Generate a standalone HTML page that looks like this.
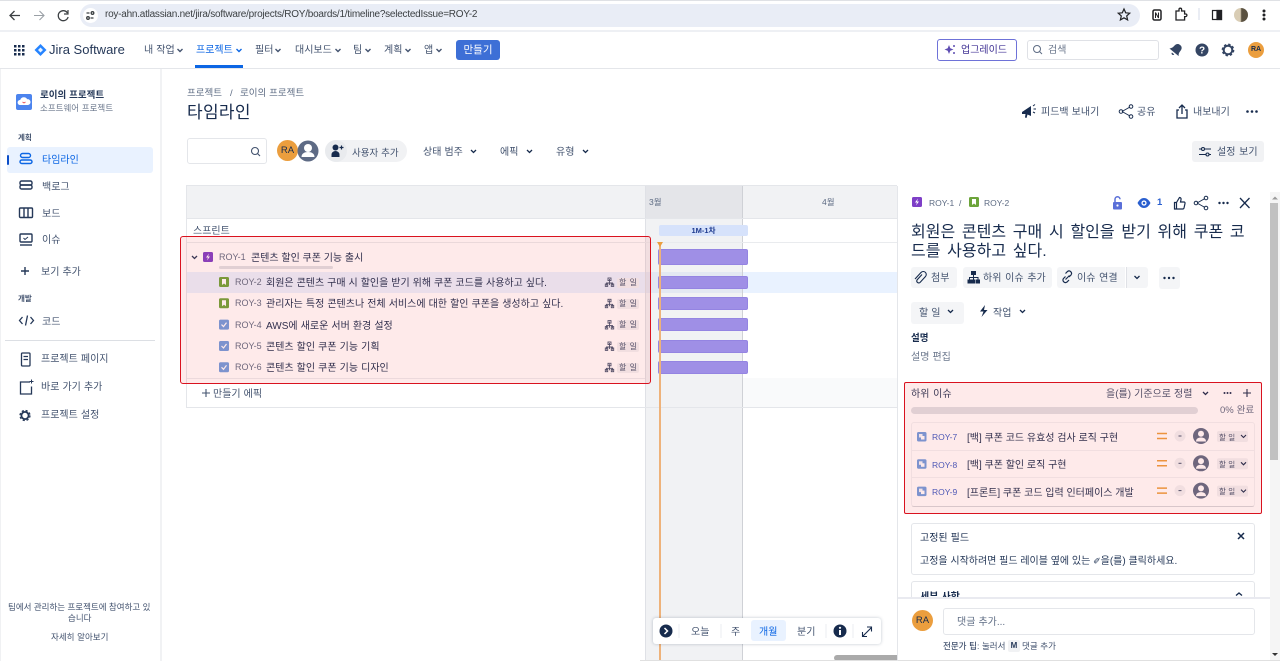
<!DOCTYPE html>
<html lang="ko"><head><meta charset="utf-8"><title>타임라인</title>
<style>
html,body{margin:0;padding:0;width:1280px;height:661px;overflow:hidden;background:#fff}
body{position:relative;font-family:"Liberation Sans","Noto Sans CJK KR",sans-serif;color:#42526e;font-size:10px}
.b{position:absolute}
.t{position:absolute;white-space:nowrap;line-height:14px;font-size:10px;word-spacing:.3px;color:#42526e;margin-top:4px}
.n{margin-top:0}
.id{font-size:9px;color:#5e6c84;margin-top:2px}
svg{position:absolute;overflow:visible}
.tag{position:absolute;background:#f1f2f4;border-radius:2px;width:22px;height:10px;text-align:center;font-size:8px;line-height:10px;color:#42526e;word-spacing:1px}
.bar{position:absolute;left:658px;width:90px;height:13px;background:#9f8fe6;border:1px solid #9484e2;box-sizing:border-box;border-radius:2px}
</style></head><body>
<!-- Browser chrome -->
<div class="b" style="left:0;top:0;width:1280px;height:1px;background:#dfe1e5"></div>
<div class="b" style="left:0;top:30px;width:1280px;height:2px;background:#eef0f4"></div>
<div class="b" style="left:80px;top:4px;width:1060px;height:23px;background:#e9edf6;border-radius:12px"></div>
<div class="b" style="left:83px;top:8px;width:15px;height:15px;background:#fff;border-radius:50%"></div>
<svg style="left:0;top:0" width="110" height="30" fill="none" stroke="#3c4043" stroke-width="1.300">
<path d="M20 15.500H10M14.500 11l-4.500 4.500 4.500 4.500"/>
<path d="M44 15.500H34M39.500 11l4.500 4.500-4.500 4.500" stroke="#9aa0a6" stroke-width="1.100"/>
<path d="M67.500 13a5 5 0 1 0 .6 4"/><path d="M68 10v4h-4" stroke-width="1.200"/>
<path d="M86.500 13h3M90.500 18h3" stroke-width="1.200"/><circle cx="92.500" cy="13" r="1.300"/><circle cx="88" cy="18" r="1.300"/>
</svg>
<div class="t n" style="left:105px;top:8px;font-size:10px;letter-spacing:-.24px;word-spacing:0;color:#3c4043">roy-ahn.atlassian.net/jira/software/projects/ROY/boards/1/timeline?selectedIssue=ROY-2</div>
<svg style="left:1115px;top:5px" width="160" height="20" fill="none" stroke="#202124" stroke-width="1.200">
<path d="M9 4l1.700 3.800 4 .4-3 2.700.9 4L9 12.800 5.400 14.900l.9-4-3-2.700 4-.4z"/>
<rect x="38" y="5" width="8" height="10" rx="1.500" stroke-width="1.500"/><path d="M40.500 13V7.500l3 5.500V7.500" stroke-width="1"/>
<path d="M61 6h3V4.500a1.300 1.300 0 0 1 2.600 0V6h3v3h1a1.300 1.300 0 0 1 0 2.600h-1V15H61z" stroke-width="1.300"/>
<path d="M84 3v12" stroke="#d5dbe8" stroke-width="1"/>
<rect x="97.500" y="5.500" width="9" height="9" stroke-width="1.200"/><rect x="102" y="5.500" width="4.500" height="9" fill="#202124"/>
<circle cx="149" cy="6" r=".9" fill="#202124"/><circle cx="149" cy="10" r=".9" fill="#202124"/><circle cx="149" cy="14" r=".9" fill="#202124"/>
</svg>
<div class="b" style="left:1234px;top:8px;width:14px;height:14px;border-radius:50%;background:linear-gradient(90deg,#d9cdb5 0 45%,#5a5140 55% 100%)"></div>

<!-- Top nav -->
<div class="b" style="left:0;top:68px;width:1280px;height:1px;background:#e4e6ea"></div>
<svg style="left:14px;top:45px" width="12" height="12" fill="#172b4d"><rect x="0" y="0" width="2.500" height="2.500"/><rect x="4" y="0" width="2.500" height="2.500"/><rect x="8" y="0" width="2.500" height="2.500"/><rect x="0" y="4" width="2.500" height="2.500"/><rect x="4" y="4" width="2.500" height="2.500"/><rect x="8" y="4" width="2.500" height="2.500"/><rect x="0" y="8" width="2.500" height="2.500"/><rect x="4" y="8" width="2.500" height="2.500"/><rect x="8" y="8" width="2.500" height="2.500"/></svg>
<svg style="left:34px;top:44px" width="13" height="13"><path d="M6.500 0L12.500 6 6.500 12 .5 6z" fill="#2684ff"/><path d="M6.500 3.500L9 6 6.500 8.500 4 6z" fill="#fff" opacity=".9"/></svg>
<div class="t n" style="left:49px;top:43px;font-size:13px;word-spacing:0;color:#253858">Jira Software</div>
<div class="t" style="left:144px;top:40px">내 작업</div>
<div class="t" style="left:196px;top:40px;color:#0c66e4">프로젝트</div>
<div class="t" style="left:255px;top:40px">필터</div>
<div class="t" style="left:295px;top:40px">대시보드</div>
<div class="t" style="left:353px;top:40px">팀</div>
<div class="t" style="left:384px;top:40px">계획</div>
<div class="t" style="left:424px;top:40px">앱</div>
<svg style="left:0;top:46px" width="500" height="10" fill="none" stroke="#42526e" stroke-width="1.400">
<path d="M177.500 3l2.500 2.500L182.500 3M275.500 3l2.500 2.500L280.500 3M335.500 3l2.500 2.500L340.500 3M365.500 3l2.500 2.500L370.500 3M405.500 3l2.500 2.500L410.500 3M436.500 3l2.500 2.500L441.500 3"/>
<path d="M236.500 3l2.500 2.500L241.500 3" stroke="#0c66e4"/>
</svg>
<div class="b" style="left:195px;top:65px;width:48px;height:3px;background:#0c66e4"></div>
<div class="b" style="left:456px;top:40px;width:44px;height:20px;background:#3d6fd6;border-radius:3px;color:#fff;text-align:center;line-height:20px;font-size:10.500px">만들기</div>
<div class="b" style="left:937px;top:39px;width:78px;height:20px;border:1px solid #6e72d8;border-radius:3px"></div>
<svg style="left:944px;top:43px" width="14" height="14" fill="#5e4db2"><path d="M5 2l1.300 3.200L9.500 6.500 6.300 7.800 5 11 3.700 7.800.5 6.500l3.200-1.300z"/><circle cx="10" cy="3" r="1"/><circle cx="10" cy="10" r="1"/></svg>
<div class="t" style="left:961px;top:40px;color:#403294">업그레이드</div>
<div class="b" style="left:1027px;top:40px;width:130px;height:18px;border:1.500px solid #dfe1e6;border-radius:3px"></div>
<svg style="left:1032px;top:44px" width="12" height="12" fill="none" stroke="#5e6c84" stroke-width="1"><circle cx="5" cy="5" r="3.500"/><path d="M7.500 7.500L10 10"/></svg>
<div class="t" style="left:1048px;top:40px;color:#6b778c">검색</div>
<svg style="left:1169px;top:42px" width="70" height="16">
<g transform="rotate(40 7 8)" fill="#344563"><path d="M7 1.500c-2.800 0-4 2-4 4.500 0 2.500-.8 3.800-2 5h12c-1.200-1.200-2-2.500-2-5 0-2.500-1.200-4.500-4-4.500z"/><path d="M5.500 12.500h3a1.500 1.500 0 0 1-3 0z"/></g>
<circle cx="33" cy="8" r="6.500" fill="#344563"/><text x="33" y="11.500" text-anchor="middle" font-size="10" font-weight="700" fill="#fff" font-family="Liberation Sans">?</text>
<circle cx="59" cy="8" r="4.300" fill="none" stroke="#344563" stroke-width="2"/>
<circle cx="59" cy="8" r="5.600" fill="none" stroke="#344563" stroke-width="1.500" stroke-dasharray="2.400 2"/>
</svg>
<div class="b" style="left:1248px;top:42px;width:16px;height:16px;border-radius:50%;background:#eb9e3e;color:#172b4d;font-size:7px;font-weight:700;text-align:center;line-height:16px">RA</div>

<!-- Sidebar -->
<div class="b" style="left:0;top:69px;width:1px;height:592px;background:#f0f1f3"></div>
<div class="b" style="left:160px;top:69px;width:2px;height:592px;background:#f1f2f4"></div>
<div class="b" style="left:16px;top:94px;width:16px;height:16px;background:#4c84ee;border-radius:2px"></div>
<svg style="left:16px;top:94px" width="16" height="16"><path d="M4 11a2.500 2.500 0 0 1 .2-5 3.800 3.800 0 0 1 7-.8A2.900 2.900 0 0 1 12 11z" fill="#fff"/><path d="M6.500 8l1.500 1 1.500-1" stroke="#e5484d" fill="none" stroke-width=".8"/></svg>
<div class="t" style="left:40px;top:85px;font-weight:700;color:#253858;font-size:9.500px">로이의 프로젝트</div>
<div class="t n" style="left:40px;top:101px;font-size:8.500px;color:#6b778c">소프트웨어 프로젝트</div>
<div class="t n" style="left:18px;top:131px;font-size:7.500px;font-weight:700;color:#42526e">계획</div>
<div class="b" style="left:7px;top:147px;width:146px;height:26px;background:#e9f2ff;border-radius:3px"></div>
<div class="b" style="left:7px;top:155px;width:2px;height:10px;background:#0c4ec8;border-radius:1px"></div>
<svg style="left:18px;top:150px" width="18" height="130" fill="none" stroke="#253858" stroke-width="1.400">
<rect x="2.500" y="3.500" width="10" height="4" rx="2" stroke="#0c66e4"/><rect x="2" y="10" width="12" height="3.500" rx="1.750" stroke="#0c66e4"/>
<rect x="2" y="31" width="12" height="4" rx="1.500"/><rect x="2" y="35" width="12" height="4" rx="1.500"/>
<rect x="1.500" y="58" width="13" height="9.500" rx="1"/><path d="M6 58v9.500M10 58v9.500"/>
<rect x="2" y="84" width="12" height="8" rx="1"/><path d="M2 95h12"/><path d="M5.500 88l1.500 1.500 3-2.500" stroke-width="1"/>
<path d="M7 117v8M3 121h8"/>
</svg>
<div class="t" style="left:42px;top:150px;color:#0c66e4">타임라인</div>
<div class="t" style="left:42px;top:177px">백로그</div>
<div class="t" style="left:42px;top:204px">보드</div>
<div class="t" style="left:42px;top:230px">이슈</div>
<div class="t" style="left:41px;top:262px">보기 추가</div>
<div class="t n" style="left:18px;top:292px;font-size:7.500px;font-weight:700;color:#42526e">개발</div>
<svg style="left:18px;top:312px" width="18" height="18" fill="none" stroke="#253858" stroke-width="1.300"><path d="M5 5L2 8.500 5 12M13 5l3 3.500L13 12M10 3.500L8 13.500" transform="translate(-.5,0)"/></svg>
<div class="t" style="left:42px;top:312px">코드</div>
<div class="b" style="left:5px;top:340px;width:150px;height:1px;background:#dcdfe4"></div>
<svg style="left:18px;top:350px" width="18" height="75" fill="none" stroke="#253858" stroke-width="1.300">
<rect x="3.500" y="3" width="8.500" height="13" rx="1"/><path d="M5.500 6.500h4.500M5.500 9.500h4.500"/>
<path d="M12 32H2.500v12h11V36.500"/><path d="M13.500 29.500v4M11.500 31.500h4" stroke-width="1"/>
<circle cx="7" cy="65.500" r="3.600" stroke-width="1.800"/><circle cx="7" cy="65.500" r="5" stroke-width="1.300" stroke-dasharray="2.200 1.800"/>
</svg>
<div class="t" style="left:41px;top:349px">프로젝트 페이지</div>
<div class="t" style="left:41px;top:377px">바로 가기 추가</div>
<div class="t" style="left:41px;top:405px">프로젝트 설정</div>
<div class="t n" style="left:8px;top:600px;font-size:8.500px;word-spacing:0;color:#42526e">팀에서 관리하는 프로젝트에 참여하고 있</div>
<div class="t n" style="left:68px;top:611px;font-size:8.500px;color:#42526e">습니다</div>
<div class="t n" style="left:51px;top:630px;font-size:8.500px;color:#42526e">자세히 알아보기</div>

<!-- Header -->
<div class="t" style="left:187px;top:83px;font-size:9.500px;color:#5e6c84">프로젝트</div>
<div class="t" style="left:230px;top:83px;font-size:9.500px;color:#5e6c84">/</div>
<div class="t" style="left:240px;top:83px;font-size:9.500px;color:#5e6c84">로이의 프로젝트</div>
<div class="t" style="left:187px;top:98px;font-size:17px;line-height:22px;color:#172b4d;letter-spacing:.3px">타임라인</div>
<svg style="left:1020px;top:102px" width="250" height="20" fill="#172b4d">
<path d="M2 10L11 4v10L7.500 12.500 6.500 16 5 15.500 5.500 12 2 12z"/><path d="M13 5l2-1.500M13.500 8h2.500M13 11l2 1" stroke="#172b4d" fill="none" transform="translate(0,-1)"/>
<g fill="none" stroke="#172b4d" stroke-width="1"><path d="M102 9.500l8-4.500M102 9.500l8 4.500"/><circle cx="101" cy="9.500" r="1.800"/><circle cx="111" cy="4.500" r="1.800"/><circle cx="111" cy="14.500" r="1.800"/>
<path d="M159 8h-2v8h10V8h-2M162 12V3.500M159 6l3-3 3 3" stroke-width="1.300"/></g>
<circle cx="227.500" cy="9.500" r="1.300"/><circle cx="232" cy="9.500" r="1.300"/><circle cx="236.500" cy="9.500" r="1.300"/>
</svg>
<div class="t" style="left:1041px;top:102px">피드백 보내기</div>
<div class="t" style="left:1137px;top:102px">공유</div>
<div class="t" style="left:1193px;top:102px">내보내기</div>
<!-- Toolbar -->
<div class="b" style="left:187px;top:138px;width:80px;height:26px;border:1.500px solid #e4e6ea;border-radius:3px;box-sizing:border-box"></div>
<svg style="left:250px;top:146px" width="12" height="12" fill="none" stroke="#42526e" stroke-width="1.100"><circle cx="5" cy="5" r="3.500"/><path d="M7.500 7.500L10 10"/></svg>
<div class="b" style="left:277px;top:140px;width:21px;height:21px;border-radius:50%;background:#eb9e3e;color:#172b4d;font-size:9.500px;text-align:center;line-height:21px">RA</div>
<svg style="left:297px;top:140px" width="22" height="22"><circle cx="11" cy="11" r="10.500" fill="#5e6b85"/><circle cx="11" cy="8" r="4" fill="#fff"/><path d="M4.500 17c0-3.500 3-5 6.500-5s6.500 1.500 6.500 5z" fill="#fff"/></svg>
<div class="b" style="left:325px;top:140px;width:82px;height:22px;background:#f1f2f4;border-radius:11px"></div>
<div class="b" style="left:325px;top:140px;width:22px;height:22px;background:#e9ebee;border-radius:11px"></div>
<svg style="left:329px;top:143px" width="16" height="16" fill="#172b4d"><circle cx="6.500" cy="4.500" r="3"/><path d="M2.500 14v-2.500c0-2 2-3.500 4-3.500s4 1.500 4 3.500V14z"/><path d="M10.500 4.500h4M12.500 2.500v4" stroke="#172b4d" stroke-width="1.200"/></svg>
<div class="t" style="left:352px;top:143px;font-size:9.500px">사용자 추가</div>
<div class="t" style="left:423px;top:142px">상태 범주</div>
<div class="t" style="left:500px;top:142px">에픽</div>
<div class="t" style="left:556px;top:142px">유형</div>
<svg style="left:0;top:148px" width="600" height="8" fill="none" stroke="#172b4d" stroke-width="1.300"><path d="M471 2l2.500 2.500L476 2M527 2l2.500 2.500L532 2M583 2l2.500 2.500L588 2"/></svg>
<div class="b" style="left:1192px;top:141px;width:72px;height:21px;background:#f1f2f4;border-radius:3px"></div>
<svg style="left:1198px;top:145px" width="14" height="13" fill="none" stroke="#172b4d" stroke-width="1.100"><path d="M1 4h12M1 9.500h12"/><circle cx="5" cy="4" r="1.500" fill="#f1f2f4"/><circle cx="9.500" cy="9.500" r="1.500" fill="#f1f2f4"/></svg>
<div class="t" style="left:1217px;top:142px;word-spacing:1px">설정 보기</div>

<!-- Timeline table -->
<div class="b" style="left:186px;top:185px;width:711px;height:1px;background:#e4e6ea"></div>
<div class="b" style="left:186px;top:186px;width:1px;height:222px;background:#e4e6ea"></div>
<div class="b" style="left:187px;top:186px;width:458px;height:32px;background:#f1f2f4"></div>
<div class="b" style="left:645px;top:186px;width:1px;height:475px;background:#dfe1e6"></div>
<div class="b" style="left:646px;top:186px;width:96px;height:32px;background:#e4e5e9"></div>
<div class="b" style="left:743px;top:186px;width:154px;height:32px;background:#f1f2f4"></div>
<div class="b" style="left:646px;top:218px;width:96px;height:443px;background:#f1f2f4"></div>
<div class="b" style="left:742px;top:186px;width:1px;height:475px;background:#cfd1d6"></div>
<div class="b" style="left:187px;top:218px;width:710px;height:1px;background:#e4e6ea"></div>
<div class="b" style="left:187px;top:242px;width:710px;height:1px;background:#e9ebee"></div>
<div class="b" style="left:187px;top:272px;width:458px;height:21px;background:#e9f2ff"></div>
<div class="b" style="left:646px;top:272px;width:96px;height:21px;background:#e3e8f2"></div>
<div class="b" style="left:743px;top:272px;width:154px;height:21px;background:#e9f2ff"></div>
<div class="b" style="left:743px;top:378px;width:154px;height:30px;background:#f9fafb"></div>
<div class="b" style="left:187px;top:378px;width:458px;height:1px;background:#ebecf0"></div>
<div class="b" style="left:187px;top:407px;width:710px;height:1px;background:#e4e6ea"></div>
<div class="t n" style="left:649px;top:195px;font-size:8.500px;color:#5e6c84">3월</div>
<div class="t n" style="left:822px;top:195px;font-size:8.500px;color:#5e6c84">4월</div>
<div class="t" style="left:193px;top:221px;color:#42526e">스프린트</div>
<div class="b" style="left:659px;top:225px;width:89px;height:11px;background:#d6e2fb;border-radius:2px;text-align:center;font-size:7.500px;line-height:11px;font-weight:700;color:#1d3a8f">1M-1차</div>
<div class="bar" style="top:249px;height:16px"></div>
<div class="bar" style="top:276px"></div><div class="bar" style="top:297px"></div><div class="bar" style="top:318px"></div><div class="bar" style="top:340px"></div><div class="bar" style="top:361px"></div>
<div class="b" style="left:659px;top:243px;width:2px;height:418px;background:#eeb27a"></div>
<svg style="left:657px;top:242px" width="6" height="5"><path d="M0 0h6L3 5z" fill="#eb9e3e"/></svg>

<!-- Rows -->
<svg style="left:190px;top:254px" width="10" height="8" fill="none" stroke="#253858" stroke-width="1.300"><path d="M2 2l2.500 2.500L7 2"/></svg>
<svg style="left:203px;top:252px" width="10" height="10"><rect width="10" height="10" rx="1.500" fill="#7e3fc7"/><path d="M6 1.500L3 5.500h2L4 8.500l3-4H5z" fill="#fff"/></svg>
<div class="t id" style="left:219px;top:248px">ROY-1</div>
<div class="t" style="left:251px;top:248px;color:#172b4d;word-spacing:0">콘텐츠 할인 쿠폰 기능 출시</div>
<div class="b" style="left:219px;top:266px;width:114px;height:3px;background:#dfe1e6;border-radius:2px"></div>
<svg style="left:219px;top:277px" width="10" height="96">
<rect width="10" height="10" rx="1.500" fill="#6ca43a"/><path d="M3 2h4v6L5 6.500 3 8z" fill="#fff"/>
<rect y="21.300" width="10" height="10" rx="1.500" fill="#6ca43a"/><path d="M3 23.300h4v6l-2-1.500-2 1.500z" fill="#fff"/>
<rect y="42.600" width="10" height="10" rx="1.500" fill="#6f9ee0"/><path d="M2.500 47.600l2 2 3-4" stroke="#fff" fill="none" stroke-width="1.200"/>
<rect y="64" width="10" height="10" rx="1.500" fill="#6f9ee0"/><path d="M2.500 69l2 2 3-4" stroke="#fff" fill="none" stroke-width="1.200"/>
<rect y="85.300" width="10" height="10" rx="1.500" fill="#6f9ee0"/><path d="M2.500 90.300l2 2 3-4" stroke="#fff" fill="none" stroke-width="1.200"/>
</svg>
<div class="t id" style="left:235px;top:273px">ROY-2</div><div class="t" style="left:266px;top:273px;color:#172b4d;word-spacing:.2px">회원은 콘텐츠 구매 시 할인을 받기 위해 쿠폰 코드를 사용하고 싶다.</div>
<div class="t id" style="left:235px;top:294px">ROY-3</div><div class="t" style="left:266px;top:294px;color:#172b4d;word-spacing:.3px">관리자는 특정 콘텐츠나 전체 서비스에 대한 할인 쿠폰을 생성하고 싶다.</div>
<div class="t id" style="left:235px;top:316px">ROY-4</div><div class="t" style="left:266px;top:316px;color:#172b4d">AWS에 새로운 서버 환경 설정</div>
<div class="t id" style="left:235px;top:337px">ROY-5</div><div class="t" style="left:266px;top:337px;color:#172b4d">콘텐츠 할인 쿠폰 기능 기획</div>
<div class="t id" style="left:235px;top:358px">ROY-6</div><div class="t" style="left:266px;top:358px;color:#172b4d">콘텐츠 할인 쿠폰 기능 디자인</div>
<svg style="left:605px;top:278px" width="9" height="94" fill="none" stroke="#42526e" stroke-width=".9">
<g id="h"><path d="M4.500 1v6M1.500 7.500V5h6v2.500"/><rect x="3" y="0" width="3" height="2.500"/><rect x=".3" y="6" width="2.400" height="2.400"/><rect x="6.300" y="6" width="2.400" height="2.400"/></g>
<use href="#h" y="21.300"/><use href="#h" y="42.600"/><use href="#h" y="64"/><use href="#h" y="85.300"/>
</svg>
<div class="tag" style="left:617px;top:278px">할 일</div><div class="tag" style="left:617px;top:299px">할 일</div><div class="tag" style="left:617px;top:320px">할 일</div><div class="tag" style="left:617px;top:342px">할 일</div><div class="tag" style="left:617px;top:363px">할 일</div>
<svg style="left:201px;top:388px" width="10" height="10" stroke="#42526e" stroke-width="1.100"><path d="M5 1v8M1 5h8"/></svg>
<div class="t" style="left:213px;top:384px">만들기 에픽</div>
<!-- Red highlight left -->
<div class="b" style="left:180px;top:236px;width:471px;height:148px;box-sizing:border-box;border:1.500px solid #d9121f;border-radius:3px;background:rgba(250,60,60,.11)"></div>

<!-- Floating bar -->
<div class="b" style="left:653px;top:618px;width:228px;height:26px;background:#fff;border-radius:3px;box-shadow:0 0 3px rgba(9,30,66,.25)"></div>
<div class="b" style="left:751px;top:620px;width:35px;height:21px;background:#e9f2ff;border-radius:3px"></div>
<svg style="left:653px;top:618px" width="228" height="26"><circle cx="13" cy="13" r="6.500" fill="#172b4d"/><path d="M11.500 10l3 3-3 3" fill="none" stroke="#fff" stroke-width="1.500"/><path d="M26 6v14M68 6v14M173 6v14M200 6v14" stroke="#ebecf0"/><circle cx="187" cy="13" r="6.500" fill="#172b4d"/><rect x="186" y="12" width="2" height="5" fill="#fff"/><circle cx="187" cy="9.800" r="1.100" fill="#fff"/><path d="M209.500 18.500l9-9M214 9h4.500v4.500M209.500 14v4.500H214" fill="none" stroke="#172b4d" stroke-width="1.100"/></svg>
<div class="t" style="left:691px;top:622px">오늘</div>
<div class="t" style="left:731px;top:622px">주</div>
<div class="t" style="left:759px;top:622px;color:#0c66e4">개월</div>
<div class="t" style="left:797px;top:622px">분기</div>
<div class="b" style="left:834px;top:655px;width:63px;height:6px;background:#aaa;border-radius:3px 0 0 3px"></div>
<div class="b" style="left:640px;top:660px;width:258px;height:1px;background:#e0e0e0"></div>

<!-- Panel -->
<div class="b" style="left:897px;top:186px;width:383px;height:475px;background:#fff;border-left:1px solid #e4e6ea;box-sizing:border-box"></div>
<div class="b" style="left:1270px;top:192px;width:10px;height:469px;background:#f5f5f5"></div>
<div class="b" style="left:1270px;top:203px;width:8px;height:257px;background:#c1c1c1"></div>
<svg style="left:1270px;top:195px" width="10" height="464" fill="#9a9a9a"><path d="M2 4.500l3-3 3 3z"/><path d="M2 458l3 3 3-3z" fill="#333"/></svg>
<svg style="left:912px;top:197px" width="70" height="11"><rect width="10" height="10" rx="1.500" fill="#7e3fc7"/><path d="M6 1.500L3 5.500h2L4 8.500l3-4H5z" fill="#fff"/><rect x="57" width="10" height="10" rx="1.500" fill="#6ca43a"/><path d="M60 2h4v6l-2-1.500L60 8z" fill="#fff"/></svg>
<div class="t n" style="left:929px;top:196px;font-size:8.500px;color:#5e6c84">ROY-1</div>
<div class="t n" style="left:959px;top:196px;font-size:8.500px;color:#5e6c84">/</div>
<div class="t n" style="left:984px;top:196px;font-size:8.500px;color:#5e6c84">ROY-2</div>
<svg style="left:1110px;top:195px" width="145" height="16" fill="none" stroke="#172b4d" stroke-width="1.200">
<rect x="3" y="7" width="9" height="7.500" rx="1" fill="#5a6fd8" stroke="none"/><path d="M5 7V4.300a2.500 2.500 0 0 1 5 0" stroke="#5a6fd8" stroke-width="1.500"/><circle cx="7.500" cy="10.500" r="1.100" fill="#fff" stroke="none"/>
<path d="M27.500 8c2-3.500 4-5 6.500-5s4.500 1.500 6.500 5c-2 3.500-4 5-6.500 5s-4.500-1.500-6.500-5z" fill="#2a5fcf" stroke="none"/><circle cx="34" cy="8" r="2.600" fill="#fff" stroke="none"/><circle cx="34" cy="8" r="1.300" fill="#2a5fcf" stroke="none"/>
<path d="M64.500 7.500h2v6.500h-2zM66.500 7.500l3-5c1.300 0 1.800 1 1.500 2.200L70.500 7h3.500c.8 0 1.200.7 1 1.500L74 13c-.2.700-.6 1-1.300 1h-6.200"/>
<path d="M87 8l8-4.500M87 8l8 4.500" stroke-width="1"/><circle cx="86" cy="8" r="1.800" stroke-width="1"/><circle cx="96" cy="3" r="1.800" stroke-width="1"/><circle cx="96" cy="13" r="1.800" stroke-width="1"/>
<circle cx="109.500" cy="8" r="1.200" fill="#172b4d" stroke="none"/><circle cx="113.500" cy="8" r="1.200" fill="#172b4d" stroke="none"/><circle cx="117.500" cy="8" r="1.200" fill="#172b4d" stroke="none"/>
<path d="M130 3l9.500 10M139.500 3L130 13" stroke-width="1.300"/>
</svg>
<div class="t n" style="left:1157px;top:196px;font-size:9.500px;color:#2a5fcf;font-weight:700">1</div>
<div class="t" style="left:911px;top:219px;font-size:16px;line-height:20px;color:#172b4d;word-spacing:2.300px">회원은 콘텐츠 구매 시 할인을 받기 위해 쿠폰 코</div>
<div class="t" style="left:911px;top:238px;font-size:16px;line-height:20px;color:#172b4d;word-spacing:2.300px">드를 사용하고 싶다.</div>
<div class="b" style="left:911px;top:267px;width:46px;height:21px;background:#f4f5f7;border-radius:3px"></div>
<div class="b" style="left:963px;top:267px;width:89px;height:21px;background:#f4f5f7;border-radius:3px"></div>
<div class="b" style="left:1057px;top:267px;width:68px;height:21px;background:#f4f5f7;border-radius:3px 0 0 3px"></div>
<div class="b" style="left:1126px;top:267px;width:22px;height:21px;background:#f4f5f7;border-radius:0 3px 3px 0;border-left:1px solid #dfe1e6;box-sizing:border-box"></div>
<div class="b" style="left:1159px;top:267px;width:21px;height:22px;background:#f4f5f7;border-radius:3px"></div>
<svg style="left:911px;top:267px" width="275" height="22" fill="none" stroke="#172b4d" stroke-width="1">
<path d="M13 8l-5 5.500a2 2 0 0 0 3 2.500l5.500-6a3 3 0 0 0-4.500-4l-6 6.500" stroke-width="1.100" transform="translate(-2,-.5)"/>
<rect x="60.500" y="4.500" width="4" height="3" fill="#172b4d"/><rect x="57" y="13" width="3" height="3" fill="#172b4d"/><rect x="61" y="13" width="3" height="3" fill="#172b4d"/><rect x="65.500" y="13" width="3" height="3" fill="#172b4d"/><path d="M62.500 7.500v5.500M58.500 13v-2.500h8.500V13"/>
<path d="M155 13l-2 2a2.500 2.500 0 0 1-3.500-3.500l2-2M155 10l2-2a2.500 2.500 0 0 0-3.500-3.500l-2 2M151.500 12.500l4-4" transform="translate(3,0)" stroke-width="1.200"/>
<path d="M223.500 9l2.500 2.500L228.500 9" stroke-width="1.300"/>
<circle cx="253.500" cy="11" r="1.200" fill="#172b4d" stroke="none"/><circle cx="258" cy="11" r="1.200" fill="#172b4d" stroke="none"/><circle cx="262.500" cy="11" r="1.200" fill="#172b4d" stroke="none"/>
</svg>
<div class="t" style="left:931px;top:268px">첨부</div>
<div class="t" style="left:983px;top:268px;word-spacing:1px">하위 이슈 추가</div>
<div class="t" style="left:1077px;top:268px;word-spacing:1px">이슈 연결</div>
<div class="b" style="left:911px;top:302px;width:53px;height:22px;background:#f4f5f7;border-radius:3px"></div>
<div class="t" style="left:919px;top:303px">할 일</div>
<svg style="left:945px;top:308px" width="90" height="14" fill="none" stroke="#172b4d" stroke-width="1.300"><path d="M3 2l2.500 2.500L8 2M75 2l2.500 2.500L80 2"/><path d="M40 -3l-5 6.500h3.500l-2 5.500 6-7h-3.500z" fill="#172b4d" stroke="none"/></svg>
<div class="t" style="left:993px;top:303px">작업</div>
<div class="t" style="left:911px;top:328px;font-weight:700;font-size:9.500px;color:#172b4d">설명</div>
<div class="t" style="left:911px;top:347px;color:#6b778c">설명 편집</div>
<!-- Subtasks -->
<div class="t" style="left:911px;top:384px;color:#253858;word-spacing:1px">하위 이슈</div>
<div class="t" style="left:1106px;top:384px">을(를) 기준으로 정렬</div>
<svg style="left:1200px;top:386px" width="55" height="14" fill="none" stroke="#172b4d"><path d="M3 6l2.500 2.500L8 6" stroke-width="1.300"/><circle cx="24.500" cy="7" r=".5" fill="#172b4d"/><circle cx="27.500" cy="7" r=".5" fill="#172b4d"/><circle cx="30.500" cy="7" r=".5" fill="#172b4d"/><path d="M47 3v8M43 7h8" stroke-width="1.100"/></svg>
<div class="b" style="left:911px;top:407px;width:287px;height:7px;background:#dfe1e6;border-radius:4px"></div>
<div class="t" style="left:1220px;top:400px;color:#5e6c84;font-size:9.500px">0% 완료</div>
<div class="b" style="left:911px;top:422px;width:344px;height:85px;box-sizing:border-box;border:1px solid #f1f2f4;border-bottom:1.500px solid #d5d7dc;border-radius:3px"></div>
<div class="b" style="left:912px;top:450px;width:342px;height:1px;background:#f1f2f4"></div>
<div class="b" style="left:912px;top:477px;width:342px;height:1px;background:#f1f2f4"></div>
<svg style="left:917px;top:432px" width="10" height="66"><g id="s"><rect width="9.500" height="9.500" rx="1.500" fill="#6f9ee0"/><rect x="2" y="2" width="3.500" height="3.500" fill="#fff" opacity=".9"/><rect x="4" y="4" width="3.500" height="3.500" fill="#fff"/></g><use href="#s" y="27.300"/><use href="#s" y="54.600"/></svg>
<div class="t n" style="left:932px;top:430px;font-size:8.500px;color:#3b5cc4">ROY-7</div>
<div class="t n" style="left:932px;top:458px;font-size:8.500px;color:#3b5cc4">ROY-8</div>
<div class="t n" style="left:932px;top:485px;font-size:8.500px;color:#3b5cc4">ROY-9</div>
<div class="t" style="left:967px;top:428px;color:#172b4d;word-spacing:0">[백] 쿠폰 코드 유효성 검사 로직 구현</div>
<div class="t" style="left:967px;top:455px;color:#172b4d;word-spacing:0">[백] 쿠폰 할인 로직 구현</div>
<div class="t" style="left:967px;top:483px;color:#172b4d;word-spacing:0">[프론트] 쿠폰 코드 입력 인터페이스 개발</div>
<svg style="left:1157px;top:430px" width="97" height="72">
<g id="r"><path d="M0 3.500h10M0 8.500h10" stroke="#eb9e3e" stroke-width="1.500"/><circle cx="23" cy="6" r="5.500" fill="#f1f2f4"/><path d="M21.500 6h3" stroke="#42526e"/><circle cx="44" cy="6" r="8" fill="#5e6b85"/><circle cx="44" cy="3.800" r="3" fill="#fff"/><path d="M39 11.500c0-3 2.500-4 5-4s5 1 5 4z" fill="#fff"/><rect x="60" y="1" width="31" height="11" rx="2" fill="#f1f2f4"/><path d="M84 5l2.500 2.500L89 5" fill="none" stroke="#172b4d" stroke-width="1.100"/></g>
<use href="#r" y="27.300"/><use href="#r" y="54.600"/></svg>
<div class="t n" style="left:1219px;top:431px;font-size:7.500px">할 일</div>
<div class="t n" style="left:1219px;top:458px;font-size:7.500px">할 일</div>
<div class="t n" style="left:1219px;top:485px;font-size:7.500px">할 일</div>
<!-- Red highlight right -->
<div class="b" style="left:904px;top:382px;width:358px;height:132px;box-sizing:border-box;border:1.500px solid #d9121f;border-radius:2px;background:rgba(250,60,60,.11)"></div>
<!-- Pinned -->
<div class="b" style="left:911px;top:523px;width:344px;height:52px;box-sizing:border-box;border:1px solid #e4e6ea;border-radius:3px"></div>
<div class="t" style="left:920px;top:528px;color:#172b4d">고정된 필드</div>
<svg style="left:1236px;top:531px" width="10" height="10" stroke="#172b4d" stroke-width="1.500"><path d="M2 2l6 6M8 2L2 8"/></svg>
<div class="t" style="left:920px;top:550px;color:#253858;word-spacing:0">고정을 시작하려면 필드 레이블 옆에 있는 <span style="font-size:9px">✐</span>을(를) 클릭하세요.</div>
<div class="b" style="left:911px;top:581px;width:344px;height:30px;box-sizing:border-box;border:1px solid #e4e6ea;border-radius:3px"></div>
<div class="t" style="left:920px;top:587px;color:#172b4d;font-weight:700">세부 사항</div>
<svg style="left:1234px;top:591px" width="10" height="6" fill="none" stroke="#172b4d" stroke-width="1.300"><path d="M2 4.500L5 2l3 2.500"/></svg>
<div class="b" style="left:898px;top:597px;width:372px;height:64px;background:#fff;border-top:2px solid #e9eaf0;box-sizing:border-box"></div>
<div class="b" style="left:912px;top:610px;width:21px;height:21px;border-radius:50%;background:#eb9e3e;color:#172b4d;font-size:9.500px;text-align:center;line-height:21px">RA</div>
<div class="b" style="left:943px;top:608px;width:312px;height:27px;box-sizing:border-box;border:1px solid #e4e6ea;border-radius:3px"></div>
<div class="t" style="left:957px;top:612px;color:#5e6c84">댓글 추가...</div>
<div class="t n" style="left:943px;top:639px;font-size:8.500px;color:#42526e"><b style="font-weight:500">전문가 팁:</b> 눌러서</div>
<div class="b" style="left:1008px;top:640px;width:12px;height:12px;background:#f1f2f4;border-radius:2px;text-align:center;font-size:8px;line-height:12px;font-weight:700;color:#253858">M</div>
<div class="t n" style="left:1022px;top:639px;font-size:8.500px;color:#42526e">댓글 추가</div>
<div class="b" style="left:898px;top:660px;width:382px;height:1px;background:#e0e0e0"></div>
</body></html>
